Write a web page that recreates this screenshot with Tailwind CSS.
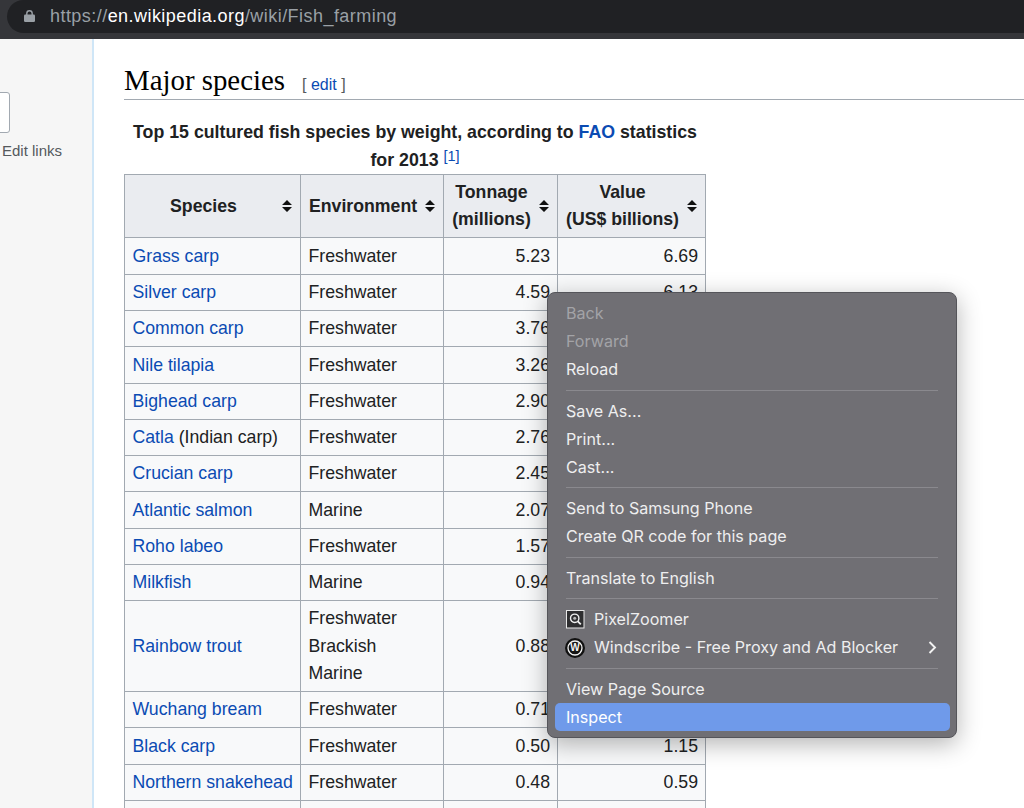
<!DOCTYPE html>
<html lang="en">
<head>
<meta charset="utf-8">
<title>Fish farming - Wikipedia</title>
<script src="https://cdn.jsdelivr.net/npm/@tailwindcss/browser@4"></script>
</head>
<body class="m-0 bg-white">
<div class="relative flex h-[808px] w-[1024px] flex-col overflow-hidden font-['Liberation_Sans',Arial,sans-serif] text-[#202122]">

  <!-- browser toolbar -->
  <div class="h-[39px] shrink-0 bg-[#35363a] pl-[7px]">
    <div class="flex h-[33px] items-center rounded-l-[17px] bg-[#202124] pb-[1px] pl-[17px] text-[18px] tracking-[0.45px] text-[#9aa0a6]">
      <svg class="mr-[15px] h-[12px] w-[11px]" viewBox="0 0 11 12"><path fill="none" stroke="#9aa0a6" stroke-width="1.4" d="M2.800 5V3.400a2.700 2.700 0 0 1 5.400 0V5"/><rect y="4.600" width="11" height="7.400" rx="1.200" fill="#9aa0a6"/></svg>
      <span>https://<span class="text-white">en.wikipedia.org</span>/wiki/Fish_farming</span>
    </div>
  </div>

  <div class="flex min-h-0 flex-1">
    <!-- sidebar -->
    <div class="w-[94px] shrink-0 border-r-2 border-[#cfe6f7] bg-[#f6f6f6]">
      <div class="mt-[53px] -ml-px h-[41px] w-[11px] rounded-r-[3px] border border-[#a2a9b1] bg-white"></div>
      <div class="mt-[7px] pl-[2px] text-[15px] leading-[22px] text-[#54595d]">Edit links</div>
    </div>

    <!-- article -->
    <div class="min-w-0 flex-1 pl-[30px]">
      <div class="mt-[24px] flex h-[37px] items-baseline border-b border-[#a2a9b1] font-['Liberation_Serif',serif] text-[28.850px] leading-[34px] text-black">
        <h2>Major species</h2>
        <span class="ml-[17px] font-['Liberation_Sans',sans-serif] text-[16px] text-[#54595d]">[ <a class="text-[#0b4bb3]">edit</a> ]</span>
      </div>

      <table class="mt-[19px] w-[581px] table-fixed border-collapse text-[17.700px] leading-[27.700px]">
        <caption class="text-[17.750px] font-bold">Top 15 cultured fish species by weight, according to <a class="text-[#0b4bb3]">FAO</a> statistics for 2013 <sup class="top-[-5px] text-[14.500px] font-normal text-[#0b4bb3]">[1]</sup></caption>
        <colgroup><col class="w-[176px]"><col class="w-[143px]"><col class="w-[114px]"><col class="w-[148px]"></colgroup>
        <thead>
          <tr class="h-[63px] bg-[#eaecf0]">
            <th class="border border-[#a2a9b1] px-[8px] font-bold"><div class="flex items-center"><span class="flex-1 pr-[8px] text-center">Species</span><svg class="h-[12px] w-[10px] shrink-0" viewBox="0 0 10 12"><path fill="#111" d="M5 0l5 5H0zM0 7h10l-5 5z"/></svg></div></th>
            <th class="border border-[#a2a9b1] px-[8px] font-bold"><div class="flex items-center"><span class="flex-1 text-left whitespace-nowrap">Environment</span><svg class="h-[12px] w-[10px] shrink-0" viewBox="0 0 10 12"><path fill="#111" d="M5 0l5 5H0zM0 7h10l-5 5z"/></svg></div></th>
            <th class="border border-[#a2a9b1] px-[8px] font-bold"><div class="flex items-center"><span class="flex-1 pr-[8px] text-center whitespace-nowrap">Tonnage<br>(millions)</span><svg class="h-[12px] w-[10px] shrink-0" viewBox="0 0 10 12"><path fill="#111" d="M5 0l5 5H0zM0 7h10l-5 5z"/></svg></div></th>
            <th class="border border-[#a2a9b1] px-[8px] font-bold"><div class="flex items-center"><span class="flex-1 pr-[8px] text-center whitespace-nowrap">Value<br>(US$ billions)</span><svg class="h-[12px] w-[10px] shrink-0" viewBox="0 0 10 12"><path fill="#111" d="M5 0l5 5H0zM0 7h10l-5 5z"/></svg></div></th>
          </tr>
        </thead>
        <tbody class="bg-[#f8f9fa]">
          <tr class="h-[37px]"><td class="border border-[#a2a9b1] px-[7.500px]"><a class="text-[#0b4bb3]">Grass carp</a></td><td class="border border-[#a2a9b1] px-[7.500px]">Freshwater</td><td class="border border-[#a2a9b1] px-[7px] text-right">5.23</td><td class="border border-[#a2a9b1] px-[7px] text-right">6.69</td></tr>
          <tr class="h-[36px]"><td class="border border-[#a2a9b1] px-[7.500px]"><a class="text-[#0b4bb3]">Silver carp</a></td><td class="border border-[#a2a9b1] px-[7.500px]">Freshwater</td><td class="border border-[#a2a9b1] px-[7px] text-right">4.59</td><td class="border border-[#a2a9b1] px-[7px] text-right">6.13</td></tr>
          <tr class="h-[36px]"><td class="border border-[#a2a9b1] px-[7.500px]"><a class="text-[#0b4bb3]">Common carp</a></td><td class="border border-[#a2a9b1] px-[7.500px]">Freshwater</td><td class="border border-[#a2a9b1] px-[7px] text-right">3.76</td><td class="border border-[#a2a9b1] px-[7px] text-right"></td></tr>
          <tr class="h-[37px]"><td class="border border-[#a2a9b1] px-[7.500px]"><a class="text-[#0b4bb3]">Nile tilapia</a></td><td class="border border-[#a2a9b1] px-[7.500px]">Freshwater</td><td class="border border-[#a2a9b1] px-[7px] text-right">3.26</td><td class="border border-[#a2a9b1] px-[7px] text-right"></td></tr>
          <tr class="h-[36px]"><td class="border border-[#a2a9b1] px-[7.500px]"><a class="text-[#0b4bb3]">Bighead carp</a></td><td class="border border-[#a2a9b1] px-[7.500px]">Freshwater</td><td class="border border-[#a2a9b1] px-[7px] text-right">2.90</td><td class="border border-[#a2a9b1] px-[7px] text-right"></td></tr>
          <tr class="h-[36px]"><td class="border border-[#a2a9b1] px-[7.500px]"><a class="text-[#0b4bb3]">Catla</a> (Indian carp)</td><td class="border border-[#a2a9b1] px-[7.500px]">Freshwater</td><td class="border border-[#a2a9b1] px-[7px] text-right">2.76</td><td class="border border-[#a2a9b1] px-[7px] text-right"></td></tr>
          <tr class="h-[36px]"><td class="border border-[#a2a9b1] px-[7.500px]"><a class="text-[#0b4bb3]">Crucian carp</a></td><td class="border border-[#a2a9b1] px-[7.500px]">Freshwater</td><td class="border border-[#a2a9b1] px-[7px] text-right">2.45</td><td class="border border-[#a2a9b1] px-[7px] text-right"></td></tr>
          <tr class="h-[37px]"><td class="border border-[#a2a9b1] px-[7.500px]"><a class="text-[#0b4bb3]">Atlantic salmon</a></td><td class="border border-[#a2a9b1] px-[7.500px]">Marine</td><td class="border border-[#a2a9b1] px-[7px] text-right">2.07</td><td class="border border-[#a2a9b1] px-[7px] text-right"></td></tr>
          <tr class="h-[36px]"><td class="border border-[#a2a9b1] px-[7.500px]"><a class="text-[#0b4bb3]">Roho labeo</a></td><td class="border border-[#a2a9b1] px-[7.500px]">Freshwater</td><td class="border border-[#a2a9b1] px-[7px] text-right">1.57</td><td class="border border-[#a2a9b1] px-[7px] text-right"></td></tr>
          <tr class="h-[36px]"><td class="border border-[#a2a9b1] px-[7.500px]"><a class="text-[#0b4bb3]">Milkfish</a></td><td class="border border-[#a2a9b1] px-[7.500px]">Marine</td><td class="border border-[#a2a9b1] px-[7px] text-right">0.94</td><td class="border border-[#a2a9b1] px-[7px] text-right"></td></tr>
          <tr class="h-[91px]"><td class="border border-[#a2a9b1] px-[7.500px]"><a class="text-[#0b4bb3]">Rainbow trout</a></td><td class="border border-[#a2a9b1] px-[7.500px]">Freshwater<br>Brackish<br>Marine</td><td class="border border-[#a2a9b1] px-[7px] text-right">0.88</td><td class="border border-[#a2a9b1] px-[7px] text-right"></td></tr>
          <tr class="h-[36px]"><td class="border border-[#a2a9b1] px-[7.500px]"><a class="text-[#0b4bb3]">Wuchang bream</a></td><td class="border border-[#a2a9b1] px-[7.500px]">Freshwater</td><td class="border border-[#a2a9b1] px-[7px] text-right">0.71</td><td class="border border-[#a2a9b1] px-[7px] text-right"></td></tr>
          <tr class="h-[37px]"><td class="border border-[#a2a9b1] px-[7.500px]"><a class="text-[#0b4bb3]">Black carp</a></td><td class="border border-[#a2a9b1] px-[7.500px]">Freshwater</td><td class="border border-[#a2a9b1] px-[7px] text-right">0.50</td><td class="border border-[#a2a9b1] px-[7px] text-right">1.15</td></tr>
          <tr class="h-[36px]"><td class="border border-[#a2a9b1] px-[7.500px] whitespace-nowrap"><a class="text-[#0b4bb3]">Northern snakehead</a></td><td class="border border-[#a2a9b1] px-[7.500px]">Freshwater</td><td class="border border-[#a2a9b1] px-[7px] text-right">0.48</td><td class="border border-[#a2a9b1] px-[7px] text-right">0.59</td></tr>
          <tr class="h-[36px]"><td class="border border-[#a2a9b1]"></td><td class="border border-[#a2a9b1]"></td><td class="border border-[#a2a9b1]"></td><td class="border border-[#a2a9b1]"></td></tr>
        </tbody>
      </table>
    </div>
  </div>

  <!-- context menu -->
  <div class="absolute left-[547px] top-[292px] box-border h-[446px] w-[409.500px] rounded-[8px] border border-[#55555a] bg-[#706f74] py-[6px] font-['Inter',sans-serif] text-[16.100px] text-[#eeeeef] shadow-[0_6px_24px_rgba(0,0,0,0.3)]">
    <div class="flex h-[28px] items-center pt-[1px] pl-[18px] text-[#a3a3a7]">Back</div>
    <div class="flex h-[28px] items-center pt-[1px] pl-[18px] text-[#a3a3a7]">Forward</div>
    <div class="flex h-[28px] items-center pt-[1px] pl-[18px]">Reload</div>
    <div class="ml-[18px] mr-[17.500px] my-[6.500px] h-px bg-[#8a898e]"></div>
    <div class="flex h-[28px] items-center pt-[1px] pl-[18px]">Save As...</div>
    <div class="flex h-[28px] items-center pt-[1px] pl-[18px]">Print...</div>
    <div class="flex h-[28px] items-center pt-[1px] pl-[18px]">Cast...</div>
    <div class="ml-[18px] mr-[17.500px] my-[6px] h-px bg-[#8a898e]"></div>
    <div class="flex h-[28px] items-center pt-[1px] pl-[18px]">Send to Samsung Phone</div>
    <div class="flex h-[28px] items-center pt-[1px] pl-[18px]">Create QR code for this page</div>
    <div class="ml-[18px] mr-[17.500px] my-[6.500px] h-px bg-[#8a898e]"></div>
    <div class="flex h-[28px] items-center pt-[1px] pl-[18px]">Translate to English</div>
    <div class="ml-[18px] mr-[17.500px] my-[6px] h-px bg-[#8a898e]"></div>
    <div class="flex h-[28px] items-center pt-[1px] pl-[18px]">
      <svg class="mr-[9px] h-[19px] w-[19px] shrink-0" viewBox="0 0 19 19"><rect x=".5" y=".5" width="17.500" height="17.500" fill="#2e2e30" stroke="#e8e8e8"/><circle cx="8.700" cy="8.300" r="4.200" fill="none" stroke="#f0f0f0" stroke-width="1.400"/><path d="M11.800 11.400l3 3" stroke="#f0f0f0" stroke-width="1.800"/><circle cx="8.700" cy="8.300" r="1.500" fill="#b8b8b8"/></svg>
      <span>PixelZoomer</span>
    </div>
    <div class="flex h-[28px] items-center pt-[1px] pl-[18px]">
      <svg class="mr-[9px] -ml-px h-[20px] w-[20px] shrink-0" viewBox="0 0 20 20"><circle cx="10" cy="10" r="10" fill="#111"/><circle cx="10" cy="10" r="7" fill="#151515" stroke="#f4f4f4" stroke-width="1.300"/><text x="10" y="13.400" text-anchor="middle" font-family="Liberation Sans, sans-serif" font-size="10" font-weight="700" fill="#f4f4f4">W</text></svg>
      <span class="whitespace-nowrap">Windscribe - Free Proxy and Ad Blocker</span>
      <svg class="ml-[30px] h-[13px] w-[9px] shrink-0" viewBox="0 0 9 13"><path d="M1.500 1l5.500 5.500-5.500 5.500" fill="none" stroke="#f2f2f2" stroke-width="1.900"/></svg>
    </div>
    <div class="ml-[18px] mr-[17.500px] my-[6.500px] h-px bg-[#8a898e]"></div>
    <div class="flex h-[28px] items-center pt-[1px] pl-[18px]">View Page Source</div>
    <div class="ml-[6.500px] mr-[6px] flex h-[28px] items-center rounded-[5px] bg-[#6f9aea] pt-[1px] pl-[11.500px] text-white">Inspect</div>
  </div>
</div>
</body>
</html>
